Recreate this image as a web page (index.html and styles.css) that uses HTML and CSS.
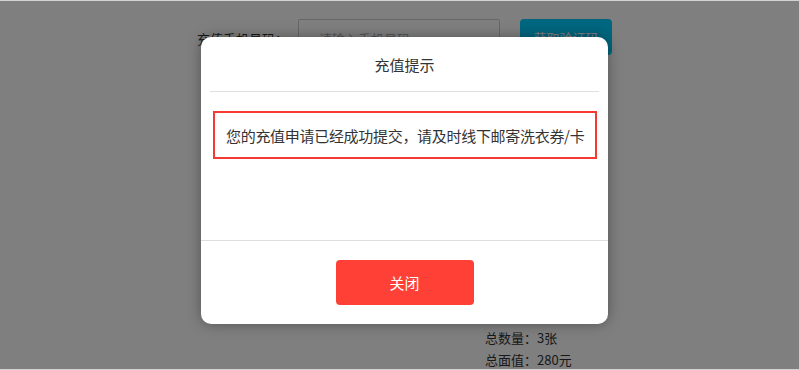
FILE: index.html
```html
<!DOCTYPE html>
<html lang="zh-CN">
<head>
    <meta charset="UTF-8">
    <meta name="viewport" content="width=device-width, initial-scale=1.0">
    <title>充值提示</title>
    <link rel="stylesheet" href="styles.css">
</head>
<body>
    <div class="frame">

        <!-- Phone row -->
        <div class="phone-row">
            <label class="phone-label" for="phoneInput">充值手机号码：</label>
            <input type="text" id="phoneInput" class="phone-input" placeholder="请输入手机号码">
            <button class="code-button">获取验证码</button>
        </div>

        <!-- Summary -->
        <div class="summary">
            <div class="summary-line">总数量：3张</div>
            <div class="summary-line">总面值：280元</div>
        </div>

        <!-- Dialog -->
        <div class="mask">
            <div class="dialog">
                <div class="dialog-head">充值提示</div>
                <div class="dialog-body">
                    <div class="notice">您的充值申请已经成功提交，请及时线下邮寄洗衣券/卡</div>
                </div>
                <div class="dialog-foot">
                    <button class="close-button">关闭</button>
                </div>
            </div>
        </div>

    </div>
</body>
</html>
```

FILE: styles.css
```css
/* Recharge page with confirm dialog */

body {
    margin: 0;
    font-family: "Noto Sans CJK SC", "Noto Sans", sans-serif;
    color: #333;
    background-color: #fff;
}

.frame {
    position: relative;
    height: 370px;
    box-sizing: border-box;
    border-top: 1px solid #d2d2d2;
    border-right: 1px solid #d2d2d2;
    border-bottom: 1px solid #d2d2d2;
    overflow: hidden;
}

.phone-row {
    display: flex;
    align-items: center;
    padding: 18px 0 0 197px;
}

.phone-label {
    width: 85px;
    font-size: 13px;
    color: #333;
    white-space: nowrap;
}

.phone-input {
    width: 202px;
    height: 38px;
    margin-left: 16px;
    padding: 0 20px;
    box-sizing: border-box;
    border: 1px solid #ccc;
    border-radius: 2px;
    font-family: inherit;
    font-size: 13px;
}

.phone-input::placeholder {
    color: #aaa;
}

.code-button {
    width: 92px;
    height: 36px;
    margin-left: 20px;
    border: none;
    border-radius: 4px;
    background-color: #00ccff;
    color: #fff;
    font-family: inherit;
    font-size: 13px;
    align-self: flex-start;
}

.summary {
    margin-top: 270px;
    padding-left: 485px;
}

.summary-line {
    font-size: 13px;
    line-height: 22px;
    color: #333;
}

.mask {
    position: absolute;
    inset: 0;
    background-color: rgba(0, 0, 0, 0.5);
    padding: 36px 0 0 201px;
}

.dialog {
    width: 407px;
    height: 287px;
    display: flex;
    flex-direction: column;
    background-color: #fff;
    border-radius: 10px;
    box-shadow: 0 0 14px rgba(0, 0, 0, 0.35);
}

.dialog-head {
    height: 54px;
    margin: 0 9px;
    border-bottom: 1px solid #e0e0e0;
    display: flex;
    align-items: center;
    justify-content: center;
    font-size: 15px;
    color: #333;
}

.dialog-body {
    flex: 1;
    padding: 19px 11px 0 12px;
    border-bottom: 1px solid #dedede;
}

.notice {
    height: 48px;
    box-sizing: border-box;
    border: 2px solid #f53a33;
    padding-left: 11px;
    display: flex;
    align-items: center;
    font-size: 15px;
    letter-spacing: -0.3px;
    color: #333;
    white-space: nowrap;
}

.dialog-foot {
    height: 83px;
    display: flex;
    justify-content: center;
    padding-top: 19px;
    box-sizing: border-box;
}

.close-button {
    width: 138px;
    height: 45px;
    border: none;
    border-radius: 4px;
    background-color: #ff4037;
    color: #fff;
    font-family: inherit;
    font-size: 15px;
}
```
